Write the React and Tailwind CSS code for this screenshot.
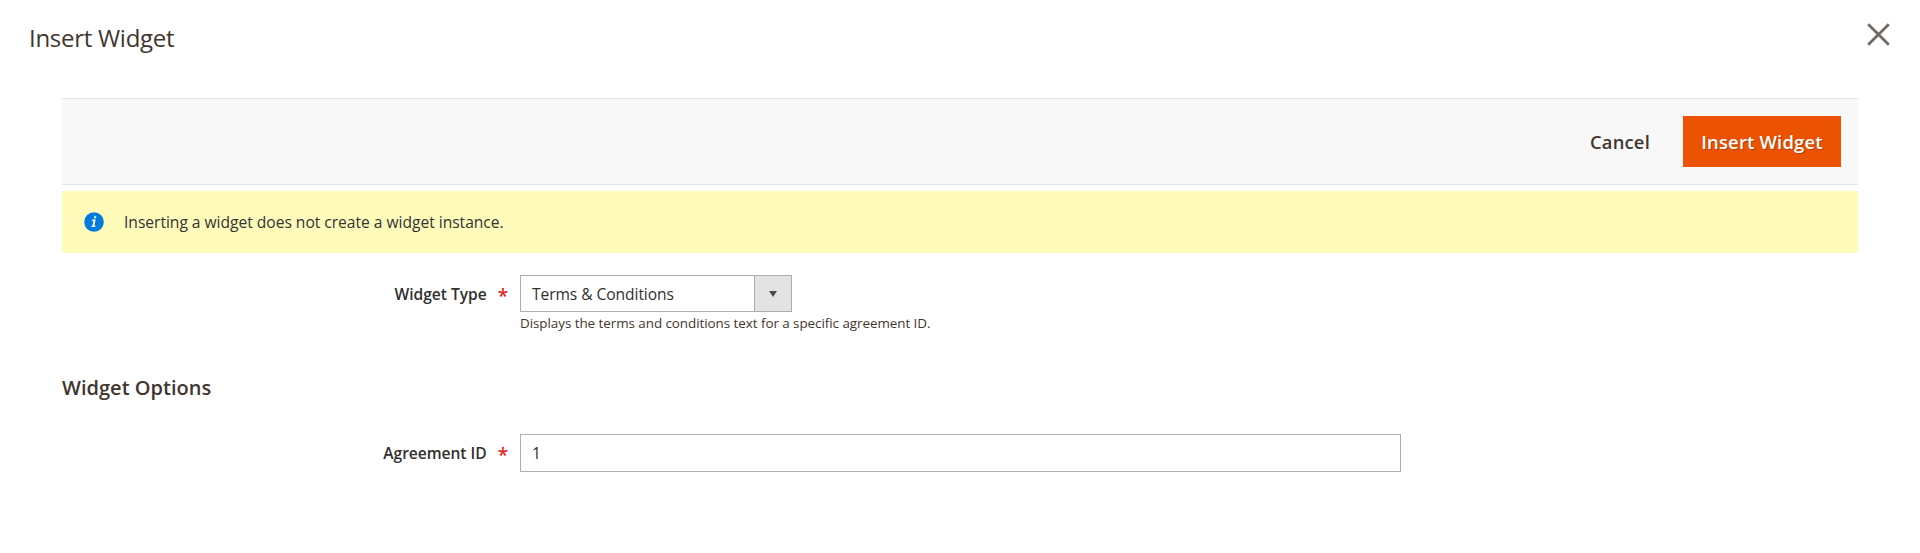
function Field({ label, children }) {
  return (
    <div className="flex">
      <label className="flex w-[458px] items-start justify-end pr-[12px] text-[15.6px] leading-[39px] font-semibold tracking-[-0.04px] text-[#303030]">
        <span>{label}</span>
        <span className="ml-[11px] text-[19px] leading-[42px] font-semibold text-[#e22626]">*</span>
      </label>
      {children}
    </div>
  );
}

export default function App() {
  return (
    <main className="h-[553px] w-full overflow-hidden bg-white font-['Open_Sans',sans-serif] text-[#41362f]">
      <header className="flex h-[98px] items-start justify-between pr-[30px] pl-[29px]">
        <h1 className="pt-[22px] text-[24px] leading-[32px] tracking-[-0.28px]">Insert Widget</h1>
        <button className="mt-[23px]" aria-label="Close">
          <svg width="23" height="23" viewBox="0 0 23 23" fill="none" stroke="#736963" strokeWidth="2.8">
            <path d="M1.2 1.2 21.8 21.8M21.8 1.2 1.2 21.8" />
          </svg>
        </button>
      </header>
      <section className="mr-[62px] ml-[62px]">
        <div className="flex h-[87px] items-center justify-end border-y border-[#e3e3e3] bg-[#f8f8f8] pr-[17px] font-semibold">
          <button className="mr-[33px] text-[18.4px] tracking-[0.2px]">Cancel</button>
          <button className="h-[51px] w-[158px] bg-[#eb5202] text-[18.4px] tracking-[0.2px] text-white [text-shadow:1px_1px_0_rgba(0,0,0,0.25)]">
            Insert Widget
          </button>
        </div>
        <div className="mt-[6px] flex h-[62px] items-center bg-[#fffbbb] pl-[22px] text-[15.6px] text-[#333333]">
          <svg className="mr-[20px]" width="20" height="20" viewBox="0 0 20 20">
            <circle cx="10" cy="10" r="9.8" fill="#007bdb" />
            <path fill="#fff" d="M10.3 4.3h2l-.4 2h-2zM8 7.5h3.7l-1.3 6.2h1.1l-.2 1.2H7.4l.2-1.2h.8l1-5H7.8z" />
          </svg>
          <p className="pt-[2px] tracking-[-0.02px]">Inserting a widget does not create a widget instance.</p>
        </div>
        <div className="pt-[22px]">
          <Field label="Widget Type">
            <div>
              <div className="flex h-[37px] w-[272px] border border-[#adadad] text-[15.6px] tracking-[-0.07px] text-[#303030]">
                <span className="flex-1 pl-[11px] leading-[36px]">Terms &amp; Conditions</span>
                <span className="flex w-[37px] items-center justify-center border-l border-[#adadad] bg-[#e3e3e3]">
                  <svg width="8" height="6" viewBox="0 0 8 6">
                    <path d="M0 0h8L4 6z" fill="#514943" />
                  </svg>
                </span>
              </div>
              <p className="pt-px text-[13.4px] leading-[20px] tracking-[-0.04px]">
                Displays the terms and conditions text for a specific agreement ID.
              </p>
            </div>
          </Field>
        </div>
        <h2 className="pt-[40px] text-[20px] leading-[30px] font-semibold tracking-[0.02px]">Widget Options</h2>
        <div className="pt-[31px]">
          <Field label="Agreement ID">
            <div className="h-[38px] w-[881px] border border-[#adadad] pl-[11px] text-[15.6px] leading-[37px] text-[#303030]">1</div>
          </Field>
        </div>
      </section>
    </main>
  );
}
